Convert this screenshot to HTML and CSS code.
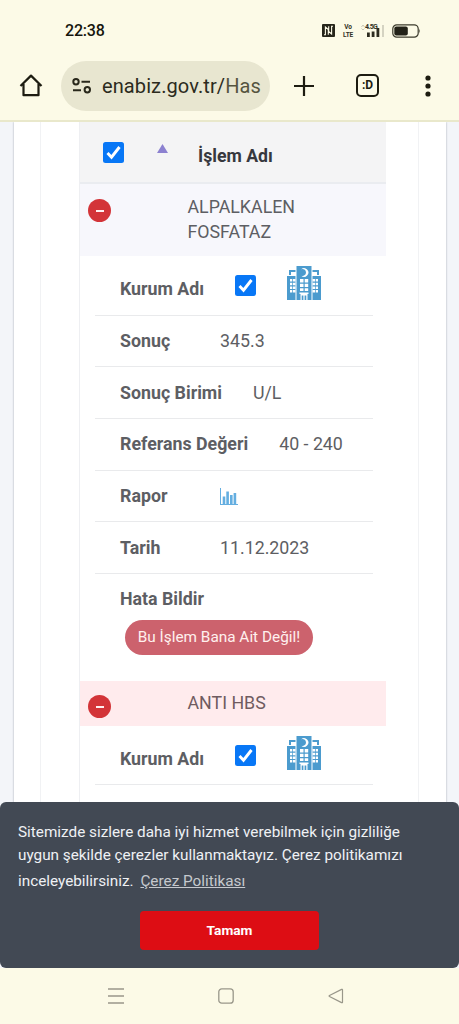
FILE: index.html
```html
<!DOCTYPE html>
<html lang="tr">
<head>
<meta charset="utf-8">
<title>e-Nabız</title>
<link rel="stylesheet" href="styles.css">
</head>
<body>
<svg class="defs" width="0" height="0" aria-hidden="true">
  <symbol id="hospital" viewBox="0 0 34 34">
    <path fill="#4b9bce" d="M9.500 0h15v34h-15zM0 10h8.500v24H0zM25.500 10H34v24h-8.500zM2 4h6.500v2H4v3H2zM25.500 4H32v5h-2V6h-4.500z"/>
    <path fill="#fff" d="M14.200 3.200A4.300 4.300 0 1 1 14.200 9.700A3.500 3.500 0 1 0 14.200 3.200z"/>
    <path fill="#fff" d="M13 13h3.500v3.500H13zM17.700 13h3.500v3.500h-3.500zM13 17.700h3.500v3.300H13zM17.700 17.700h3.500v3.300h-3.500zM13 22.200h3.500v2.800H13zM17.700 22.200h3.500v2.800h-3.500zM12.500 26.500h9v1.500h-1v6h-1.200v-4.500h-1.700V34h-1.200v-4.500h-1.700V34h-1.200v-6h-1z"/>
    <path fill="#fff" d="M3 13h2.300v2.500H3zM6 13h2.500v2.500H6zM3 16.700h2.300v2.500H3zM6 16.700h2.500v2.500H6zM3 20.400h2.300v2.500H3zM6 20.400h2.500v2.500H6zM3 24.100h2.300v2.500H3zM6 24.100h2.500v2.500H6zM25.500 13H28v2.500h-2.500zM28.700 13H31v2.500h-2.300zM25.500 16.700H28v2.500h-2.500zM28.700 16.700H31v2.500h-2.300zM25.500 20.400H28v2.500h-2.500zM28.700 20.400H31v2.500h-2.300zM25.500 24.100H28v2.500h-2.500zM28.700 24.100H31v2.500h-2.300z"/>
  </symbol>
  <symbol id="check" viewBox="0 0 21 21">
    <rect width="21" height="21" rx="2.500" fill="#0877f6"/>
    <path d="M4.500 11l4 4.200L16.500 5" fill="none" stroke="#fff" stroke-width="2.900"/>
  </symbol>
</svg>

<header class="status">
  <span class="clock">22:38</span>
  <div class="status-icons">
    <svg width="13" height="13" viewBox="0 0 13 13"><rect width="13" height="13" rx="1" fill="#26251a"/><path d="M2 10.800h1.400V3l2.900 2.600v5.200M11 2.200H9.600V10L6.700 7.400V2.200" fill="none" stroke="#fcfae7" stroke-width="1.100"/></svg>
    <span class="volte"><span>Vo</span><span>LTE</span></span>
    <span class="cell">
      <svg width="26" height="14" viewBox="0 0 26 14"><path d="M8 8.500h2.800V13H8zM12.700 7.500h2.800V13h-2.800zM17.500 4h2.800v9h-2.800z" fill="#2d2c20"/><path d="M23 1h2v12h-2z" fill="#d5d3c2"/><path d="M2.500 3l1.500-2 1.500 2M2.500 4.500L4 6l1.500-1.500" fill="none" stroke="#c9c7b5"/></svg>
      <span class="gen">4.5G</span>
    </span>
    <svg class="battery" width="29" height="14" viewBox="0 0 29 14"><rect x=".8" y=".8" width="25.400" height="12.400" rx="4" fill="none" stroke="#3b3a2c" stroke-width="1.200"/><rect x="2.300" y="2.500" width="13.500" height="9" rx="2" fill="#222118"/><path d="M27.300 4.500q1.500 2.500 0 5z" fill="#3b3a2c"/></svg>
  </div>
</header>

<div class="toolbar">
  <svg class="home" width="24" height="24" viewBox="0 0 24 24"><path d="M1.500 12L12 1.600 22.500 12M4.500 10v11.200h15V10" fill="none" stroke="#1d1c11" stroke-width="2.200" stroke-linejoin="round"/></svg>
  <div class="omnibox">
    <svg width="20" height="16" viewBox="0 0 20 16" fill="none" stroke="#29281b" stroke-width="2"><circle cx="4" cy="3.700" r="2.700"/><path d="M9.500 3.700H18M1 12.200h8"/><circle cx="15.300" cy="11.800" r="2.700"/></svg>
    <span class="url">enabiz.gov.tr/<span class="path">Has</span></span>
  </div>
  <svg class="plus" width="22" height="22" viewBox="0 0 22 22"><path d="M11 1v20M1 11h20" stroke="#1d1c11" stroke-width="2.200"/></svg>
  <span class="tabs">:D</span>
  <svg class="more" width="6" height="22" viewBox="0 0 6 22" fill="#1d1c11"><circle cx="3" cy="3" r="2.600"/><circle cx="3" cy="11" r="2.600"/><circle cx="3" cy="19" r="2.600"/></svg>
</div>

<main class="page">
  <div class="sheet">
    <div class="panel">
      <div class="table">
        <div class="thead">
          <svg class="cb" width="21" height="21"><use href="#check"/></svg>
          <svg class="sort" width="11" height="9" viewBox="0 0 11 9"><path d="M5.500 0L11 9H0z" fill="#8c81d0"/></svg>
          <span class="th">İşlem Adı</span>
        </div>

        <div class="item">
          <span class="minus"></span>
          <span class="name">ALPALKALEN FOSFATAZ</span>
        </div>
        <div class="details">
          <div class="row first"><b>Kurum Adı</b><svg class="cb" width="21" height="21"><use href="#check"/></svg><svg class="hosp" width="34" height="34"><use href="#hospital"/></svg></div>
          <div class="row"><b>Sonuç</b><span>345.3</span></div>
          <div class="row"><b>Sonuç Birimi</b><span>U/L</span></div>
          <div class="row"><b>Referans Değeri</b><span>40 - 240</span></div>
          <div class="row"><b>Rapor</b><span class="chart"><svg width="18" height="17" viewBox="0 0 18 17" fill="#64aee0"><path d="M0 0h1v16h17v1H0zM2.700 8.500h2.600V16H2.700zM6.300 3.500h2.600V16H6.300zM10 7h2.600v9H10zM13.600 5h2.600v11h-2.600z"/></svg></span></div>
          <div class="row"><b>Tarih</b><span>11.12.2023</span></div>
          <div class="report"><b>Hata Bildir</b><button class="deny">Bu İşlem Bana Ait Değil!</button></div>
        </div>

        <div class="item alert">
          <span class="minus"></span>
          <span class="name">ANTI HBS</span>
        </div>
        <div class="details">
          <div class="row first"><b>Kurum Adı</b><svg class="cb" width="21" height="21"><use href="#check"/></svg><svg class="hosp" width="34" height="34"><use href="#hospital"/></svg></div>
        </div>
      </div>
    </div>
  </div>

  <div class="cookie">
    <p class="line">Sitemizde sizlere daha iyi hizmet verebilmek için gizliliğe</p>
    <p class="line">uygun şekilde çerezler kullanmaktayız. Çerez politikamızı</p>
    <p class="line last">inceleyebilirsiniz. <a class="policy">Çerez Politikası</a></p>
    <button class="ok">Tamam</button>
  </div>
</main>

<nav class="sysnav">
  <svg width="16" height="16" viewBox="0 0 16 16"><path d="M0 1h16M0 8h16M0 15h16" stroke="#99978a" stroke-width="1.500"/></svg>
  <svg width="16" height="16" viewBox="0 0 16 16"><rect x=".8" y=".8" width="14.400" height="14.400" rx="3" fill="none" stroke="#99978a" stroke-width="1.300"/></svg>
  <svg width="16" height="16" viewBox="0 0 16 16"><path d="M14.500 1.800v12.400q0 .8-.9.400L1.500 8.600q-.9-.6 0-1.200L13.600 1.400q.9-.4.900.4z" fill="none" stroke="#99978a" stroke-width="1.200"/></svg>
</nav>
</body>
</html>
```
FILE: styles.css
```css
* { box-sizing: border-box; }

body {
  margin: 0;
  width: 459px;
  height: 1024px;
  display: flex;
  flex-direction: column;
  overflow: hidden;
  background: #fcfae7;
  font-family: Roboto, "Noto Sans", sans-serif;
  color: #5d5e63;
}

svg { display: block; flex: none; }
.defs { position: absolute; }
button { border: 0; padding: 0; font-family: inherit; }

/* Status bar */
.status {
  height: 60px;
  display: flex;
  justify-content: space-between;
  align-items: center;
  padding: 1px 38px 0 65px;
}
.clock { font-size: 16px; font-weight: 500; letter-spacing: -0.2px; color: #15150d; }
.status-icons { display: flex; align-items: center; }
.volte {
  display: flex;
  flex-direction: column;
  align-items: center;
  width: 12px;
  margin-left: 7px;
  font: 700 6.500px/8px Roboto, sans-serif;
  letter-spacing: -0.2px;
  color: #333225;
}
.cell { position: relative; margin: 0 7px 0 5px; }
.gen {
  position: absolute;
  left: 6px;
  top: -1px;
  font: 700 7px/8px Roboto, sans-serif;
  letter-spacing: -0.7px;
  color: #333225;
}

/* Browser toolbar */
.toolbar {
  height: 62px;
  display: flex;
  align-items: center;
  padding: 0 28px 9px 19px;
  border-bottom: 2px solid #e9e8cb;
}
.omnibox {
  width: 209px;
  height: 50px;
  margin-left: 18px;
  padding-left: 11px;
  display: flex;
  align-items: center;
  gap: 10px;
  border-radius: 25px;
  background: #e8e6d0;
  overflow: hidden;
}
.url { font-size: 20px; letter-spacing: 0.1px; color: #2c2b1d; white-space: nowrap; }
.path { color: #55543f; }
.plus { margin-left: 22.500px; }
.tabs {
  width: 23px;
  height: 23px;
  margin-left: 41.500px;
  border: 2px solid #1d1c11;
  border-radius: 5px;
  font-size: 12px;
  line-height: 18px;
  font-weight: 700;
  text-align: center;
  color: #1d1c11;
}
.more { margin-left: 46px; }

/* Page */
.page {
  position: relative;
  height: 846px;
  overflow: hidden;
  background: #f3f5f9;
}
.sheet {
  width: 432px;
  height: 846px;
  margin-left: 14px;
  padding-left: 26px;
  background: #fff;
  box-shadow: 0 0 2px #a2a8b2;
}
.panel {
  width: 379px;
  height: 846px;
  padding-left: 38px;
  border: solid #f1f2f4;
  border-width: 0 1px;
}
.table { width: 307px; height: 846px; border-left: 1px solid #eeeff2; }

.thead {
  height: 62px;
  display: flex;
  align-items: flex-start;
  padding: 20px 0 0 23px;
  background: #f4f4f5;
  border-bottom: 2px solid #eaecf0;
}
.sort { margin: 2px 0 0 33px; }
.th { margin: 4px 0 0 30px; font-size: 17.700px; line-height: 20px; font-weight: 700; color: #37383e; }

.item {
  height: 72px;
  display: flex;
  align-items: flex-start;
  padding: 10px 60px 0 8px;
  background: #f7f7fc;
}
.item.alert { height: 45px; background: #ffebed; padding-top: 9px; }
.minus {
  width: 23px;
  height: 23px;
  margin-top: 5px;
  flex: none;
  display: grid;
  place-items: center;
  border-radius: 50%;
  background: #d33438;
}
.minus::after { content: ""; width: 8px; height: 2px; margin-top: 1px; background: #fff0f0; }
.item .name { margin-left: 76.500px; font-size: 17.800px; line-height: 25px; }
.item.alert .name { color: #6f5b60; }

.details { padding: 0 13px 0 15px; font-size: 17.800px; line-height: 22px; }
.row {
  height: 51.700px;
  display: flex;
  align-items: center;
  padding: 0 0 0 25px;
  border-bottom: 1px solid #e9eaec;
}
.row.first { height: 59.500px; padding-top: 8px; }
.row.first .cb { margin: -8px 0 0 31px; }
.row.first .hosp { margin: -12px 0 0 31px; }
.row b, .report b { font-weight: 700; min-width: 69px; }
.row span { margin-left: 31px; }
.row .chart { margin-top: 2px; }
.report { height: 107px; padding: 14px 0 0 25px; display: flex; flex-direction: column; align-items: flex-start; }
.deny {
  width: 188px;
  height: 35px;
  margin: 10px 0 0 5px;
  border-radius: 18px;
  background: #cc626d;
  color: #fff0ee;
  font-size: 15.350px;
}

/* Cookie notice */
.cookie {
  position: absolute;
  left: 0;
  top: 680px;
  width: 459px;
  height: 166px;
  padding: 19px 18px 0;
  border-radius: 6px;
  background: #424954;
  color: #eff1f4;
  font-size: 15.300px;
}
.line { margin: 0; line-height: 23px; white-space: nowrap; }
.last { margin-top: 3px; }
.policy { margin-left: 3px; color: #c6c9ce; text-decoration: underline; }
.ok {
  display: block;
  width: 179px;
  height: 39px;
  margin: 18px 0 0 122px;
  padding-bottom: 1px;
  border-radius: 4px;
  background: #dd0d14;
  color: #fff;
  font-size: 13.700px;
  font-weight: 700;
}

/* Android navigation */
.sysnav {
  height: 56px;
  display: flex;
  align-items: center;
  gap: 94px;
  padding-left: 108px;
}
```
